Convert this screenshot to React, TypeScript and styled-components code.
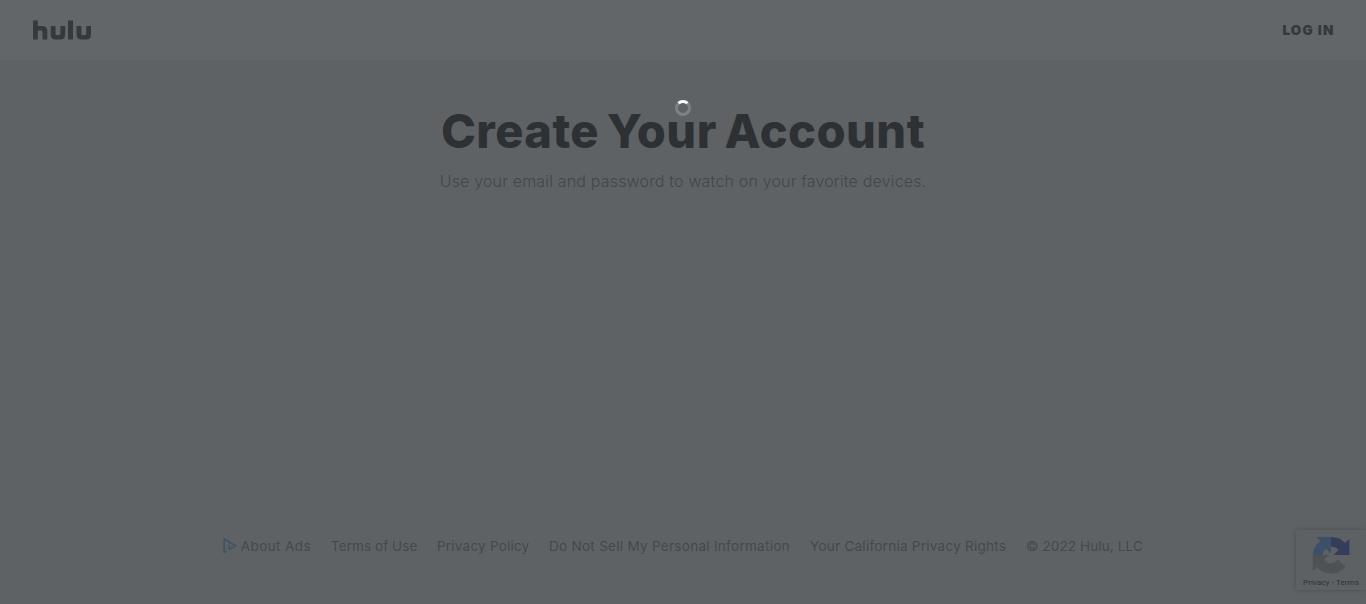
import React from "react";
import styled, { createGlobalStyle } from "styled-components";

const GlobalStyle = createGlobalStyle`
  *, *::before, *::after { box-sizing: border-box; }
  html, body { margin: 0; padding: 0; background: #5f6265; }
  body { font-family: Inter, "Liberation Sans", sans-serif; overflow: hidden; }
`;

const Page = styled.div`
  height: 604px;
  display: flex;
  flex-direction: column;
  background: #5f6265;
`;

const Header = styled.header`
  height: 60px;
  flex: none;
  display: flex;
  align-items: center;
  justify-content: space-between;
  padding: 0 32px;
  background: #626668;
`;

const LogoLink = styled.a`
  display: flex;
  color: #34393c;
`;

const LoginLink = styled.a`
  color: #34393c;
  font-size: 13.5px;
  line-height: 20px;
  font-weight: 900;
  letter-spacing: 1.2px;
  margin-right: -0.5px;
`;

const Main = styled.main`
  flex: 1;
  display: flex;
  flex-direction: column;
  align-items: center;
  padding-top: 42px;
`;

const Title = styled.h1`
  margin: 0;
  font-size: 47px;
  line-height: 58px;
  font-weight: 800;
  letter-spacing: 0.45px;
  word-spacing: -3px;
  color: #2d3134;
  white-space: nowrap;
`;

const Subtitle = styled.p`
  margin: 9px 0 0;
  font-size: 16px;
  line-height: 24px;
  font-weight: 350;
  letter-spacing: 0.17px;
  color: #42464d;
  white-space: nowrap;
`;

const Footer = styled.footer`
  flex: none;
  height: 68px;
  display: flex;
  justify-content: center;
  gap: 20px;
`;

const FooterItem = styled.span<{ $width: number; $spacing: number }>`
  width: ${(p) => p.$width}px;
  height: 20px;
  display: flex;
  align-items: center;
  gap: 4px;
  color: #42494f;
  font-size: 13.5px;
  line-height: 20px;
  letter-spacing: ${(p) => p.$spacing}px;
  white-space: nowrap;
`;

const Spinner = styled.div`
  position: absolute;
  left: 675px;
  top: 100px;
  width: 16px;
  height: 16px;
  border: 3px solid #7e8183;
  border-top-color: #fff;
  border-radius: 50%;
`;

const Badge = styled.aside`
  position: absolute;
  right: 0;
  top: 530px;
  width: 70px;
  height: 60px;
  padding-top: 6px;
  display: flex;
  flex-direction: column;
  align-items: center;
  background: #5d6163;
  border-radius: 2px 0 0 2px;
  box-shadow: 0 0 4px #4a4d4f;
`;

const BadgeText = styled.span`
  margin-top: 4px;
  font-family: Roboto, sans-serif;
  font-size: 8px;
  line-height: 10px;
  font-weight: 400;
  letter-spacing: 0.1px;
  color: #2f3132;
  white-space: nowrap;
`;

const links = [
  { label: "About Ads", width: 88, spacing: 0.4, icon: true },
  { label: "Terms of Use", width: 86, spacing: 0.07 },
  { label: "Privacy Policy", width: 92, spacing: 0.22 },
  { label: "Do Not Sell My Personal Information", width: 241, spacing: 0.29 },
  { label: "Your California Privacy Rights", width: 196, spacing: 0.26 },
  { label: "© 2022 Hulu, LLC", width: 117, spacing: 0.13 },
];

const HuluLogo = () => (
  <svg width="60" height="20" viewBox="0 0 60 20" fill="currentColor" role="img" aria-label="hulu">
    <path d="M1 .5H5.8V6H10Q15.3 6 15.3 11V19.5H10.5V12Q10.5 10.5 9.2 10.5H7.1Q5.8 10.5 5.8 12V19.5H1Z" />
    <path d="M18.7 6H23.5V13.5Q23.5 15.2 25 15.2H27Q28.4 15.2 28.4 13.5V6H33.2V14.3Q33.2 19.5 28 19.5H24Q18.7 19.5 18.7 14.3Z" />
    <path d="M36 .5H41V19.5H36Z" />
    <path d="M44.5 6H49.3V13.5Q49.3 15.2 50.8 15.2H52.8Q54.2 15.2 54.2 13.5V6H59V14.3Q59 19.5 53.8 19.5H49.8Q44.5 19.5 44.5 14.3Z" />
  </svg>
);

const AdChoices = () => (
  <svg width="14" height="16" viewBox="0 0 14 16" fill="none" stroke="#405465" strokeWidth="1.7" strokeLinejoin="round">
    <path d="M4 13.3L1.2 14.5V1L12.8 7.8L6.3 11.5V6.5" />
    <path d="M6.3 4.2V5.5" />
  </svg>
);

const Recaptcha = () => (
  <svg width="38" height="38" viewBox="0 0 38 38">
    <path fill="#3d506a" d="M19 1H4.2L8.4 5.2A18 18 0 0 0 .7 19H10.8C10.8 16 12 14 14 12.8L19 17.5Z" />
    <path fill="#343d5c" d="M19 1C24.7 1 29.8 3 33.2 7L37.4 2.7V19H21.5L26.4 14.1C24.8 11.8 22.5 10.8 19 10.8Z" />
    <path fill="#4f5254" d="M.7 19V35L4.8 30.8C8.2 35 13.3 37.5 19 37.5C25 37.5 30.1 34.8 33.5 30.5L25.8 23.5C24.3 26 22.3 27.3 19 27.3C15.5 27.3 13.3 25.5 12.2 23.8L17 19Z" />
  </svg>
);

export default function App() {
  return (
    <Page>
      <GlobalStyle />
      <Header>
        <LogoLink><HuluLogo /></LogoLink>
        <LoginLink>LOG IN</LoginLink>
      </Header>
      <Main>
        <Title>Create Your Account</Title>
        <Subtitle>Use your email and password to watch on your favorite devices.</Subtitle>
      </Main>
      <Footer>
        {links.map((link) => (
          <FooterItem key={link.label} $width={link.width} $spacing={link.spacing}>
            {link.icon && <AdChoices />}
            {link.label}
          </FooterItem>
        ))}
      </Footer>
      <Spinner />
      <Badge>
        <Recaptcha />
        <BadgeText>Privacy - Terms</BadgeText>
      </Badge>
    </Page>
  );
}
